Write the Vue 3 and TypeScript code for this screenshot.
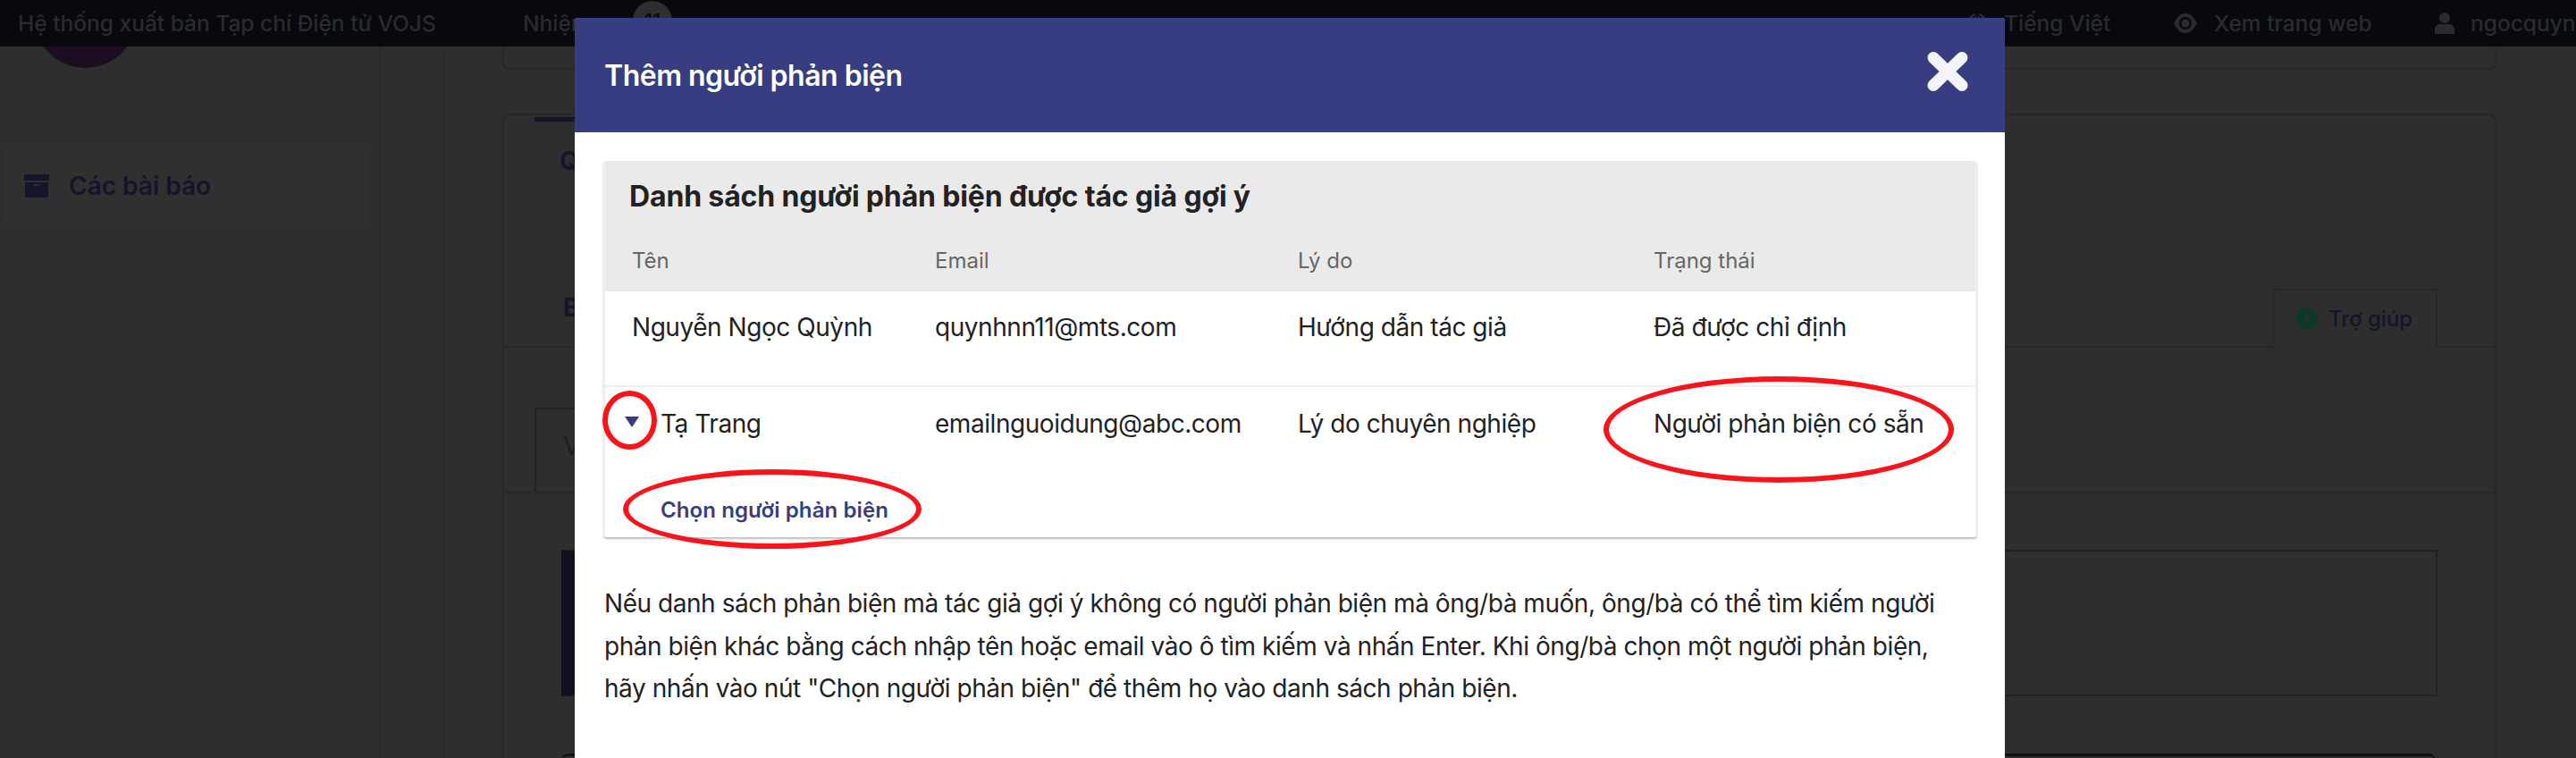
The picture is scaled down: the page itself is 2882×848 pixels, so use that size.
<script setup lang="ts">
interface Reviewer {
  name: string;
  email: string;
  reason: string;
  status: string;
  expandable?: boolean;
}

const columns = ['Tên', 'Email', 'Lý do', 'Trạng thái'];

const reviewers: Reviewer[] = [
  {
    name: 'Nguyễn Ngọc Quỳnh',
    email: 'quynhnn11@mts.com',
    reason: 'Hướng dẫn tác giả',
    status: 'Đã được chỉ định',
  },
  {
    name: 'Tạ Trang',
    email: 'emailnguoidung@abc.com',
    reason: 'Lý do chuyên nghiệp',
    status: 'Người phản biện có sẵn',
    expandable: true,
  },
];
</script>

<template>
  <div class="page">
    <!-- trang phía sau, bị làm tối -->
    <header class="topbar">
      <span class="topbar__brand">Hệ thống xuất bản Tạp chí Điện tử VOJS</span>
      <span class="topbar__tasks">Nhiệm vụ</span>
      <span class="topbar__badge">11</span>
      <span class="topbar__item topbar__item--lang">
        <svg width="24" height="26" viewBox="0 0 24 24"><circle cx="12" cy="12" r="11" fill="#2b2b2d" /><path d="M1 8h22M1 16h22M12 1v22M12 1c-7 6-7 16 0 22M12 1c7 6 7 16 0 22" stroke="#08090e" stroke-width="1.6" fill="none" /></svg>
        Tiếng Việt
      </span>
      <span class="topbar__item topbar__item--web">
        <svg width="28" height="24" viewBox="0 0 28 24"><path d="M1 12C5 4 9 1 14 1s9 3 13 11c-4 8-8 11-13 11S5 20 1 12z" fill="#2b2b2d" /><circle cx="14" cy="12" r="7" fill="#08090e" /><circle cx="14" cy="12" r="4.5" fill="#2b2b2d" /></svg>
        Xem trang web
      </span>
      <span class="topbar__item topbar__item--user">
        <svg width="22" height="24" viewBox="0 0 22 24"><circle cx="11" cy="6" r="6" fill="#2b2b2d" /><path d="M0 24v-5c0-4 3-6 6-6h10c3 0 6 2 6 6v5z" fill="#2b2b2d" /></svg>
        ngocquynh
      </span>
    </header>

    <div class="layout">
      <aside class="sidebar">
        <div class="sidebar__avatar"></div>
        <nav class="sidebar__nav">
          <svg width="28" height="26" viewBox="0 0 28 26"><path d="M0 0h28v7H0zM1 9h26v15a2 2 0 0 1-2 2H3a2 2 0 0 1-2-2z" fill="#14152a" /><path d="M11 12h6" stroke="#2e2e2e" stroke-width="2" /></svg>
          <span>Các bài báo</span>
        </nav>
      </aside>
      <div class="gutter"></div>
      <main class="content">
        <div class="panel panel--top"></div>
        <section class="panel panel--main">
          <div class="tab-mark"></div>
          <div class="panel__letter">Q</div>
          <div class="tabs">
            <span class="panel__letter panel__letter--tab">B</span>
            <span class="help-tab">
              <svg width="24" height="24" viewBox="0 0 24 24"><circle cx="12" cy="12" r="12" fill="#0a3a24" /><path d="M10 6h4v3h-4zM10 11h4v7h-4z" fill="#2e2e2e" /></svg>
              Trợ giúp
            </span>
          </div>
          <div class="subtabs">
            <span class="subtab">V</span>
          </div>
          <div class="notice"></div>
          <div class="action-box"></div>
        </section>
      </main>
    </div>

    <!-- hộp thoại -->
    <div class="modal">
      <div class="modal__header">
        <h1 class="modal__title">Thêm người phản biện</h1>
        <svg class="modal__close" width="46" height="44" viewBox="0 0 46 44">
          <path d="M7 6.5 39 37.5M39 6.5 7 37.5" stroke="#f3f5fb" stroke-width="13" stroke-linecap="round" />
        </svg>
      </div>

      <div class="modal__body">
        <div class="card">
          <div class="card__head">
            <h2 class="card__title">Danh sách người phản biện được tác giả gợi ý</h2>
            <div class="grid grid--head">
              <span v-for="col in columns" :key="col">{{ col }}</span>
            </div>
          </div>

          <div
            v-for="r in reviewers"
            :key="r.email"
            :class="['row', { 'row--open': r.expandable }]"
          >
            <div class="grid">
              <span class="cell-name">
                <i v-if="r.expandable" class="caret"></i>{{ r.name }}
              </span>
              <span>{{ r.email }}</span>
              <span>{{ r.reason }}</span>
              <span>{{ r.status }}</span>
            </div>
            <div v-if="r.expandable" class="row__action">Chọn người phản biện</div>
          </div>
        </div>

        <p class="hint">
          Nếu danh sách phản biện mà tác giả gợi ý không có người phản biện mà ông/bà muốn, ông/bà có thể tìm kiếm người<br />
          phản biện khác bằng cách nhập tên hoặc email vào ô tìm kiếm và nhấn Enter. Khi ông/bà chọn một người phản biện,<br />
          hãy nhấn vào nút "Chọn người phản biện" để thêm họ vào danh sách phản biện.
        </p>
      </div>
    </div>

    <!-- khoanh đỏ chú thích trên ảnh -->
    <i class="ring ring--caret"></i>
    <i class="ring ring--action"></i>
    <i class="ring ring--status"></i>
  </div>
</template>

<style>
html,
body {
  margin: 0;
  background: #2e2e2e;
}
</style>

<style scoped>
.page {
  position: relative;
  width: 2882px;
  height: 848px;
  overflow: hidden;
  background: #2e2e2e;
  font-family: Inter, "Noto Sans", sans-serif;
  color: #222;
}

.topbar {
  position: relative;
  z-index: 2;
  display: flex;
  align-items: center;
  height: 52px;
  padding-left: 20px;
  background: #08090e;
  color: #2b2b2d;
  font-size: 24.5px;
  font-weight: 500;
  white-space: nowrap;
}

.topbar__brand {
  flex: none;
  width: 565px;
}

.topbar__tasks {
  flex: none;
  width: 123px;
}

.topbar__badge {
  flex: none;
  width: 44px;
  height: 44px;
  margin-top: -6px;
  border-radius: 50%;
  background: #2e2e2e;
  color: #08090e;
  font-size: 22px;
  line-height: 44px;
  text-align: center;
}

.topbar__item {
  display: flex;
  flex: none;
  align-items: center;
  gap: 18px;
}

.topbar__item--lang {
  margin-left: 1448px;
  width: 231px;
}

.topbar__item--web {
  width: 293px;
}

.layout {
  display: flex;
  height: 796px;
}

.sidebar {
  width: 426px;
  flex: none;
  padding-left: 3px;
  box-sizing: border-box;
  border-right: 2px solid #292929;
}

.sidebar__avatar {
  width: 115px;
  height: 115px;
  margin: -91px 0 0 35px;
  border-radius: 50%;
  background: #1c0e20;
}

.sidebar__nav {
  display: flex;
  align-items: center;
  gap: 22px;
  width: 408px;
  height: 96px;
  margin-top: 84px;
  padding-left: 24px;
  box-sizing: border-box;
  border-radius: 8px;
  background: #303030;
  color: #14152a;
  font-size: 28px;
  font-weight: 600;
}

.gutter {
  width: 70px;
  flex: none;
  border-right: 2px solid #2b2b2b;
}

.content {
  flex: 1;
  padding-left: 64px;
  padding-right: 89px;
}

.panel {
  box-sizing: border-box;
  border: 2px solid #272727;
  border-radius: 8px;
}

.panel--top {
  height: 40px;
  margin-top: -14px;
  border-top: 0;
  border-top-left-radius: 0;
  border-top-right-radius: 0;
}

.panel--main {
  position: relative;
  height: 760px;
  margin-top: 49px;
}

.tab-mark {
  width: 140px;
  height: 5px;
  margin: 2px 0 0 34px;
  background: #14152a;
}

.panel__letter {
  margin: 27px 0 0 62px;
  color: #14152a;
  font-size: 28px;
  font-weight: 700;
}

.tabs {
  display: flex;
  align-items: flex-end;
  justify-content: space-between;
  height: 173px;
  margin-top: 17px;
  border-bottom: 2px solid #272727;
  padding-right: 64px;
}

.panel__letter--tab {
  margin: 0 0 26px 66px;
}

.help-tab {
  display: flex;
  align-items: center;
  gap: 12px;
  box-sizing: border-box;
  width: 184px;
  height: 66px;
  margin-bottom: -2px;
  padding-left: 24px;
  border: 2px solid #272727;
  border-bottom-color: #2e2e2e;
  color: #14152a;
  font-size: 24px;
  font-weight: 500;
}

.subtabs {
  display: flex;
  height: 159px;
  margin-top: 2px;
  padding-left: 34px;
  border-bottom: 2px solid #272727;
}

.subtab {
  box-sizing: border-box;
  width: 200px;
  height: 94px;
  margin-top: 65px;
  padding: 24px 0 0 30px;
  border: 2px solid #222;
  border-bottom: 0;
  color: #1d1d1d;
  font-size: 28px;
}

.notice {
  box-sizing: border-box;
  height: 164px;
  margin: 63px 64px 0 64px;
  border: 2px solid #212121;
  border-left: 15px solid #10101f;
}

.action-box {
  height: 60px;
  margin: 64px 66px 0 64px;
  border-top: 3px solid #10101f;
  border-radius: 8px 8px 0 0;
}

/* hộp thoại */
.modal {
  position: absolute;
  z-index: 3;
  top: 20px;
  left: 643px;
  width: 1600px;
  height: 828px;
  background: #fff;
  border-radius: 4px 4px 0 0;
}

.modal__header {
  display: flex;
  align-items: center;
  justify-content: space-between;
  height: 128px;
  padding: 0 41px 0 33px;
  border-radius: 4px 4px 0 0;
  background: #373d80;
}

.modal__title {
  margin: 0;
  color: #fff;
  font-size: 32px;
  font-weight: 600;
  letter-spacing: -0.5px;
}

.modal__close {
  margin-top: -8px;
}

.modal__body {
  padding: 32px 31px 0 32px;
}

.card {
  border-radius: 4px;
  border: solid #eee;
  border-width: 0 2px;
  box-shadow: 0 2px 2px rgba(0, 0, 0, 0.25);
  overflow: hidden;
}

.card__head {
  height: 146px;
  background: #eaeaea;
}

.card__title {
  margin: 0;
  padding: 20px 0 0 27px;
  color: #222;
  font-size: 32px;
  font-weight: 700;
  line-height: 40px;
  letter-spacing: -0.15px;
}

.grid {
  display: grid;
  grid-template-columns: 339px 406px 398px 1fr;
  padding-left: 30px;
}

.grid--head {
  padding-top: 35px;
  color: #666;
  font-size: 24px;
  line-height: 34px;
}

.row {
  box-sizing: border-box;
  height: 107px;
  padding-top: 23px;
  border-bottom: 2px solid #eee;
  font-size: 28px;
  line-height: 34px;
  letter-spacing: -0.45px;
}

.row--open {
  height: 168px;
  padding-top: 24px;
  border-bottom: 0;
}

.cell-name {
  display: flex;
  align-items: center;
}

.caret {
  width: 0;
  height: 0;
  margin: -4px 24px 0 -8px;
  border-style: solid;
  border-width: 12px 8px 0;
  border-color: #373d80 transparent transparent;
}

.row__action {
  margin: 63px 0 0 62px;
  color: #373d80;
  font-size: 24px;
  font-weight: 600;
  line-height: 34px;
  letter-spacing: 0.1px;
}

.hint {
  margin: 51px 0 0 1px;
  font-size: 28px;
  line-height: 47.6px;
  color: #222;
  white-space: nowrap;
  letter-spacing: -0.45px;
}

/* khoanh đỏ */
.ring {
  position: absolute;
  z-index: 4;
  box-sizing: border-box;
  border: 6px solid #f8141a;
  border-radius: 50%;
}

.ring--caret {
  left: 674px;
  top: 437px;
  width: 61px;
  height: 66px;
}

.ring--action {
  left: 697px;
  top: 525px;
  width: 334px;
  height: 89px;
}

.ring--status {
  left: 1794px;
  top: 421px;
  width: 392px;
  height: 119px;
}
</style>
